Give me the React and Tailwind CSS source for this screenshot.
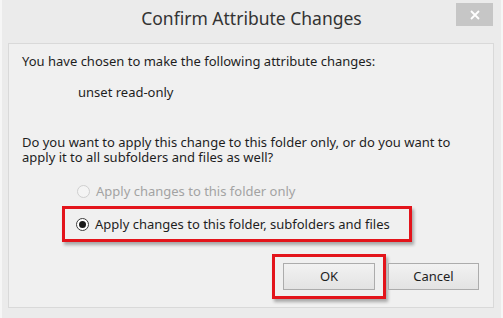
import React from 'react';

function Radio({ checked, disabled }) {
  return (
    <span
      className={`flex h-[13px] w-[13px] shrink-0 items-center justify-center rounded-full border ${
        disabled ? 'border-[#cfcfcf] bg-[#f4f4f4]' : 'border-[#3c3c3c] bg-white'
      }`}
    >
      {checked && <span className="h-[7px] w-[7px] rounded-full bg-[#1a1a1a]" />}
    </span>
  );
}

export default function App() {
  return (
    <div className="h-[318px] w-[503px] overflow-hidden bg-[#ebebeb] font-['Noto_Sans','Open_Sans',sans-serif] text-[#1e1e1e] border-l-2 border-r-2 border-[#f6f6f6]">
      {/* title bar */}
      <div className="grid h-[42px] grid-cols-[1fr_auto_1fr] items-start">
        <div />
        <div className="pt-[7px] text-[17.5px] leading-[22px] text-[#333]">Confirm Attribute Changes</div>
        <div className="flex justify-end pr-[8px] pt-[3px]">
          <button className="flex h-[23px] w-[37px] items-center justify-center bg-[#c6c6c6]">
            <svg width="10" height="10" viewBox="0 0 10 10">
              <path d="M1 1 L9 9 M9 1 L1 9" stroke="white" strokeWidth="1.8" />
            </svg>
          </button>
        </div>
      </div>

      {/* client area */}
      <div className="ml-[6px] mr-[7px] mt-[1px] h-[265px] border border-[#d9d9d9] bg-[#f0f0f0] pl-[13px] pt-[10px] text-[13px] leading-[15px]">
        <p>You have chosen to make the following attribute changes:</p>
        <p className="ml-[56px] mt-[16px]">unset read-only</p>
        <p className="mt-[35px]">Do you want to apply this change to this folder only, or do you want to</p>
        <p>apply it to all subfolders and files as well?</p>

        <div className="ml-[55px] mt-[19px] flex items-center gap-[6px] text-[#a3a3a3]">
          <Radio disabled />
          <span>Apply changes to this folder only</span>
        </div>

        <div className="ml-[40px] mt-[7px] flex h-[36px] w-[350px] items-center gap-[6px] border-[3px] border-[#e3141b] pl-[11px] shadow-[2px_3px_3px_rgba(0,0,0,0.3)]">
          <Radio checked />
          <span>Apply changes to this folder, subfolders and files</span>
        </div>

        <div className="mt-[12px] flex items-center justify-end pr-[14px]">
          <div className="flex h-[45px] w-[114px] items-center justify-center border-[3px] border-[#e3141b] shadow-[2px_3px_3px_rgba(0,0,0,0.3)]">
            <button className="h-[27px] w-[92px] border border-[#acacac] bg-gradient-to-b from-[#f2f2f2] to-[#e3e3e3] text-[13px]">
              OK
            </button>
          </div>
          <button className="ml-[2px] h-[27px] w-[91px] border border-[#acacac] bg-gradient-to-b from-[#f2f2f2] to-[#e3e3e3] text-[13px]">
            Cancel
          </button>
        </div>
      </div>
    </div>
  );
}
